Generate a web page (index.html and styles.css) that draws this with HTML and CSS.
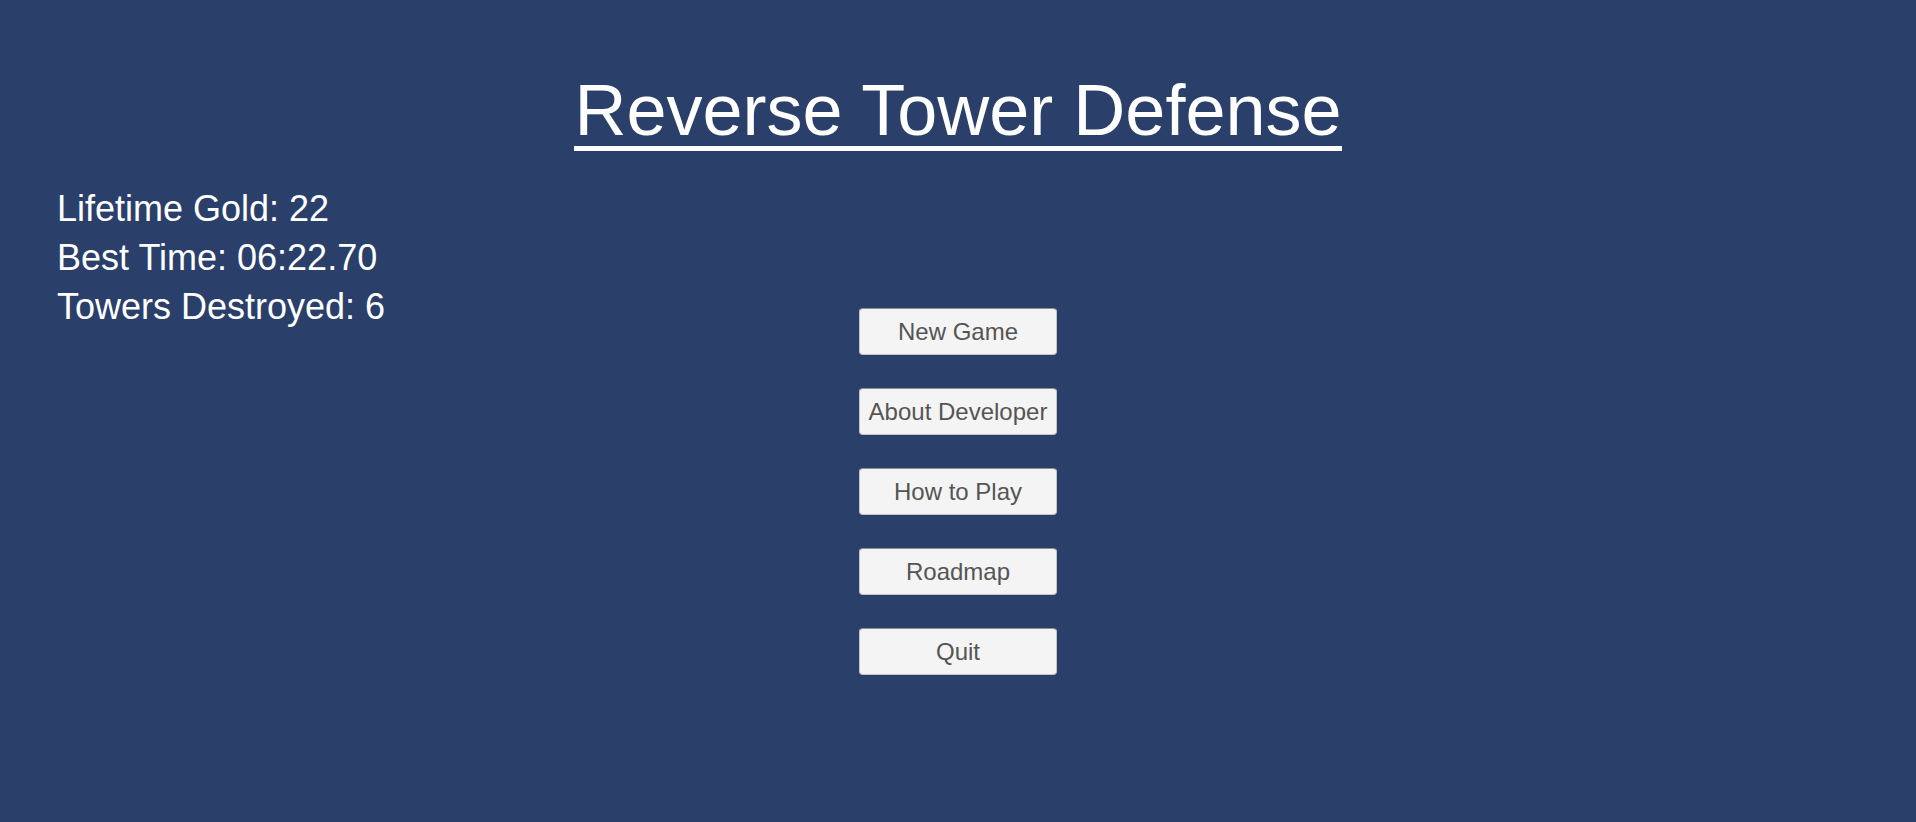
FILE: index.html
```html
<!DOCTYPE html>
<html lang="en">
<head>
<meta charset="utf-8">
<title>Reverse Tower Defense</title>
<link rel="stylesheet" href="styles.css">
</head>
<body>
<header class="header">
  <h1 class="title"><span class="title-text">Reverse Tower Defense</span></h1>
</header>
<main class="main">
  <section class="stats">
    <div class="stat">Lifetime Gold: 22</div>
    <div class="stat">Best Time: 06:22.70</div>
    <div class="stat">Towers Destroyed: 6</div>
  </section>
  <nav class="menu">
    <button class="btn">New Game</button>
    <button class="btn">About Developer</button>
    <button class="btn">How to Play</button>
    <button class="btn">Roadmap</button>
    <button class="btn">Quit</button>
  </nav>
  <div class="spacer"></div>
</main>
</body>
</html>
```
FILE: styles.css
```css
html, body {
  margin: 0;
  padding: 0;
}
body {
  width: 1916px;
  height: 822px;
  overflow: hidden;
  background: #2a406b;
  font-family: "Liberation Sans", Arial, sans-serif;
  color: #ffffff;
}
.header {
  padding-top: 74px;
  text-align: center;
}
.title {
  margin: 0;
  font-size: 72px;
  font-weight: normal;
  line-height: 72px;
}
.title-text {
  display: inline-block;
  line-height: 72px;
  border-bottom: 5px solid #ffffff;
}
.main {
  display: grid;
  grid-template-columns: 1fr 198px 1fr;
  align-items: start;
}
.stats {
  padding-left: 57px;
  margin-top: 33px;
  font-size: 36px;
  line-height: 49px;
}
.menu {
  margin-top: 157px;
  display: flex;
  flex-direction: column;
  gap: 33px;
}
.btn {
  box-sizing: border-box;
  width: 198px;
  height: 47px;
  padding: 1px 0 0;
  margin: 0;
  background: #f4f4f4;
  border: 1px solid #c4c4c4;
  border-top-color: #8e8e8e;
  border-radius: 4px;
  font-family: "Liberation Sans", Arial, sans-serif;
  font-size: 24px;
  line-height: 44px;
  color: #555555;
  text-align: center;
}
```
